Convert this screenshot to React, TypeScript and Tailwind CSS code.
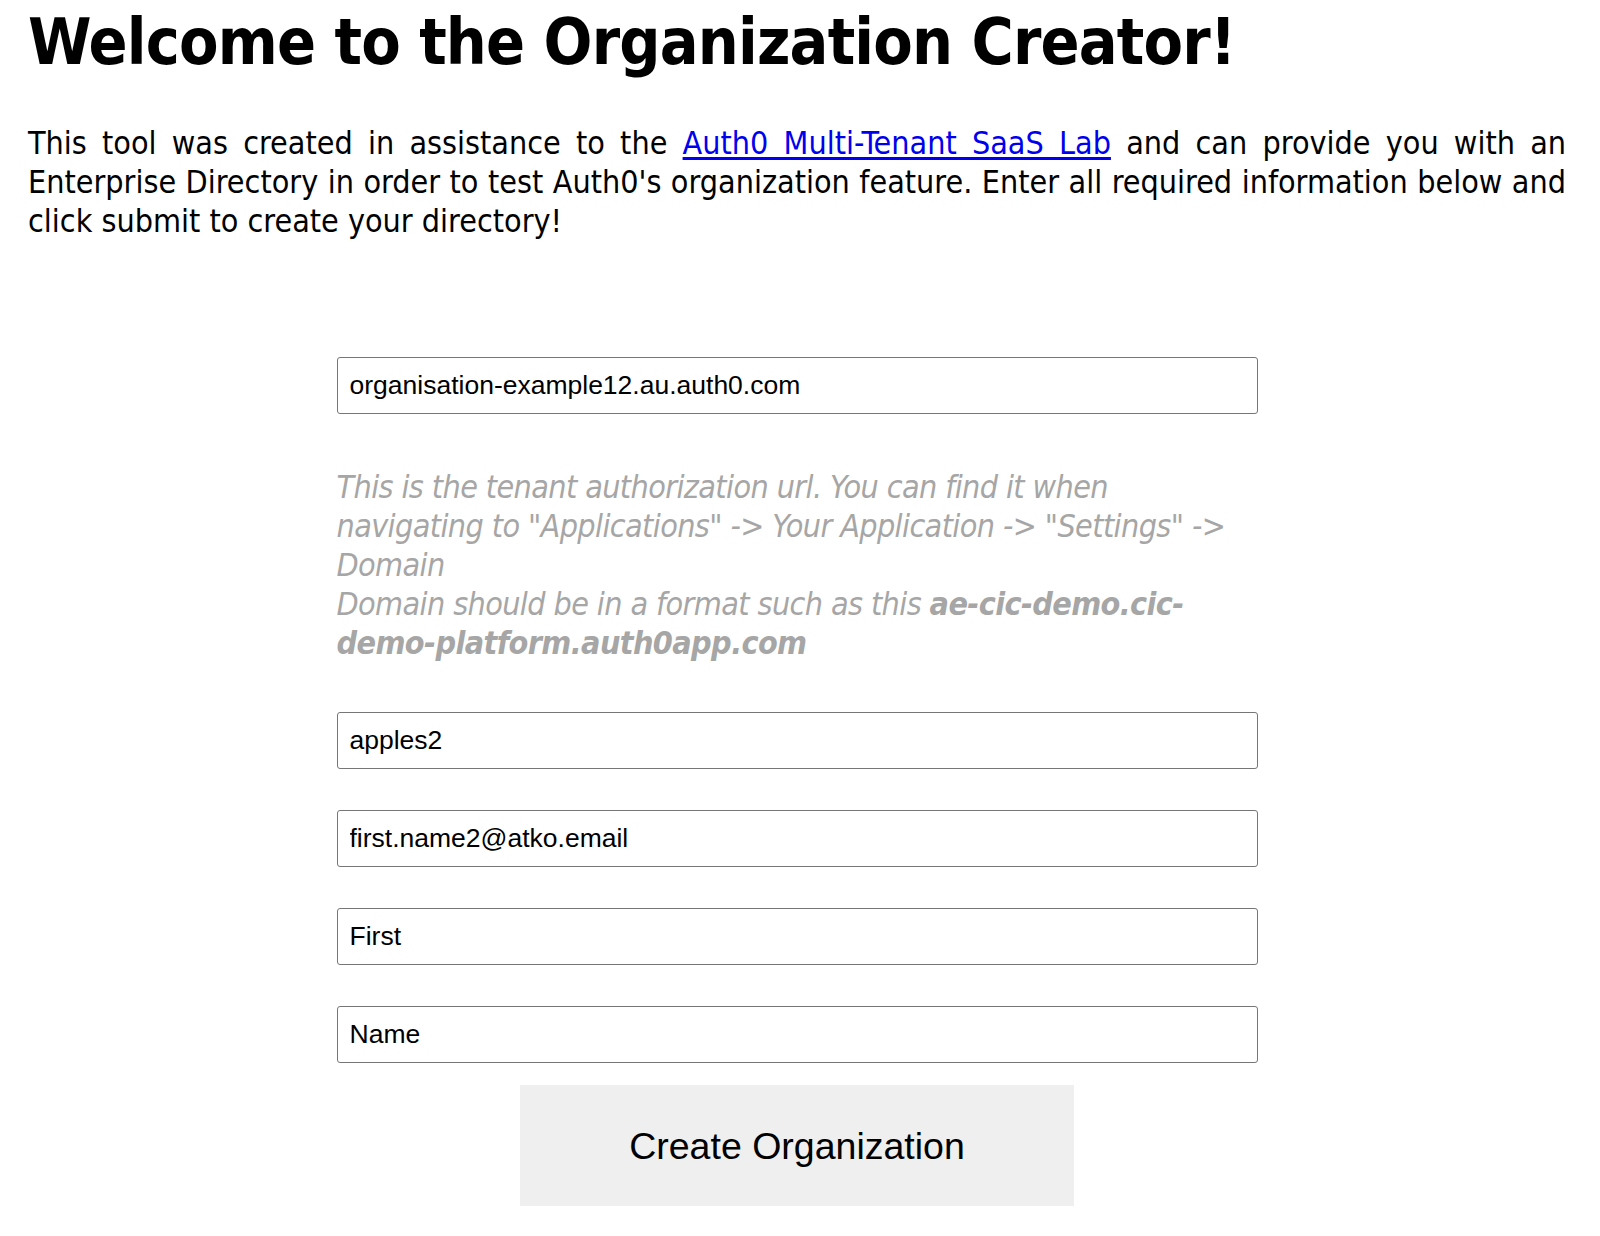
const body = { fontFamily: '"DejaVu Sans Condensed", "DejaVu Sans", Tahoma, sans-serif' };
const field = { fontFamily: '"Liberation Sans", Arial, sans-serif' };

function Field({ value }: { value: string }) {
  return (
    <input
      type="text"
      defaultValue={value}
      style={field}
      className="block w-full h-[57px] rounded-[3px] border border-[#767676] bg-white px-[12px] text-[26.5px] text-black outline-none"
    />
  );
}

export default function App() {
  return (
    <div className="min-h-screen bg-white pl-[28px] pr-[34px] text-black" style={body}>
      <h1 className="m-0 pt-[4px] text-[64px] font-bold leading-[76px] tracking-[-0.8px]">
        Welcome to the Organization Creator!
      </h1>

      <div className="mt-[44px] text-[32px] leading-[38.8px]">
        <span className="block text-justify [text-align-last:justify]">
          This tool was created in assistance to the{' '}
          <a href="#" className="text-[#0000ee] underline underline-offset-[3px]">
            Auth0 Multi-Tenant SaaS Lab
          </a>{' '}
          and can provide you with an
        </span>
        <span className="block text-justify [text-align-last:justify]">
          Enterprise Directory in order to test Auth0's organization feature. Enter all required information below and
        </span>
        <span className="block">click submit to create your directory!</span>
      </div>

      <form className="mx-auto mt-[117px] w-[921px]" onSubmit={(e) => e.preventDefault()}>
        <Field value="organisation-example12.au.auth0.com" />

        <p className="mt-[54px] whitespace-nowrap text-[32px] italic leading-[38.8px] tracking-[-0.6px] text-[#a6a6a6]">
          This is the tenant authorization url. You can find it when
          <br />
          navigating to "Applications" -&gt; Your Application -&gt; "Settings" -&gt;
          <br />
          Domain
          <br />
          Domain should be in a format such as this <b>ae-cic-demo.cic-</b>
          <br />
          <b>demo-platform.auth0app.com</b>
        </p>

        <div className="mt-[50px] flex flex-col gap-[41px]">
          <Field value="apples2" />
          <Field value="first.name2@atko.email" />
          <Field value="First" />
          <Field value="Name" />
        </div>

        <div className="mt-[22px] flex justify-center">
          <button
            type="submit"
            style={field}
            className="h-[121px] w-[554px] bg-[#efefef] text-[37.5px] text-black"
          >
            Create Organization
          </button>
        </div>
      </form>
    </div>
  );
}
